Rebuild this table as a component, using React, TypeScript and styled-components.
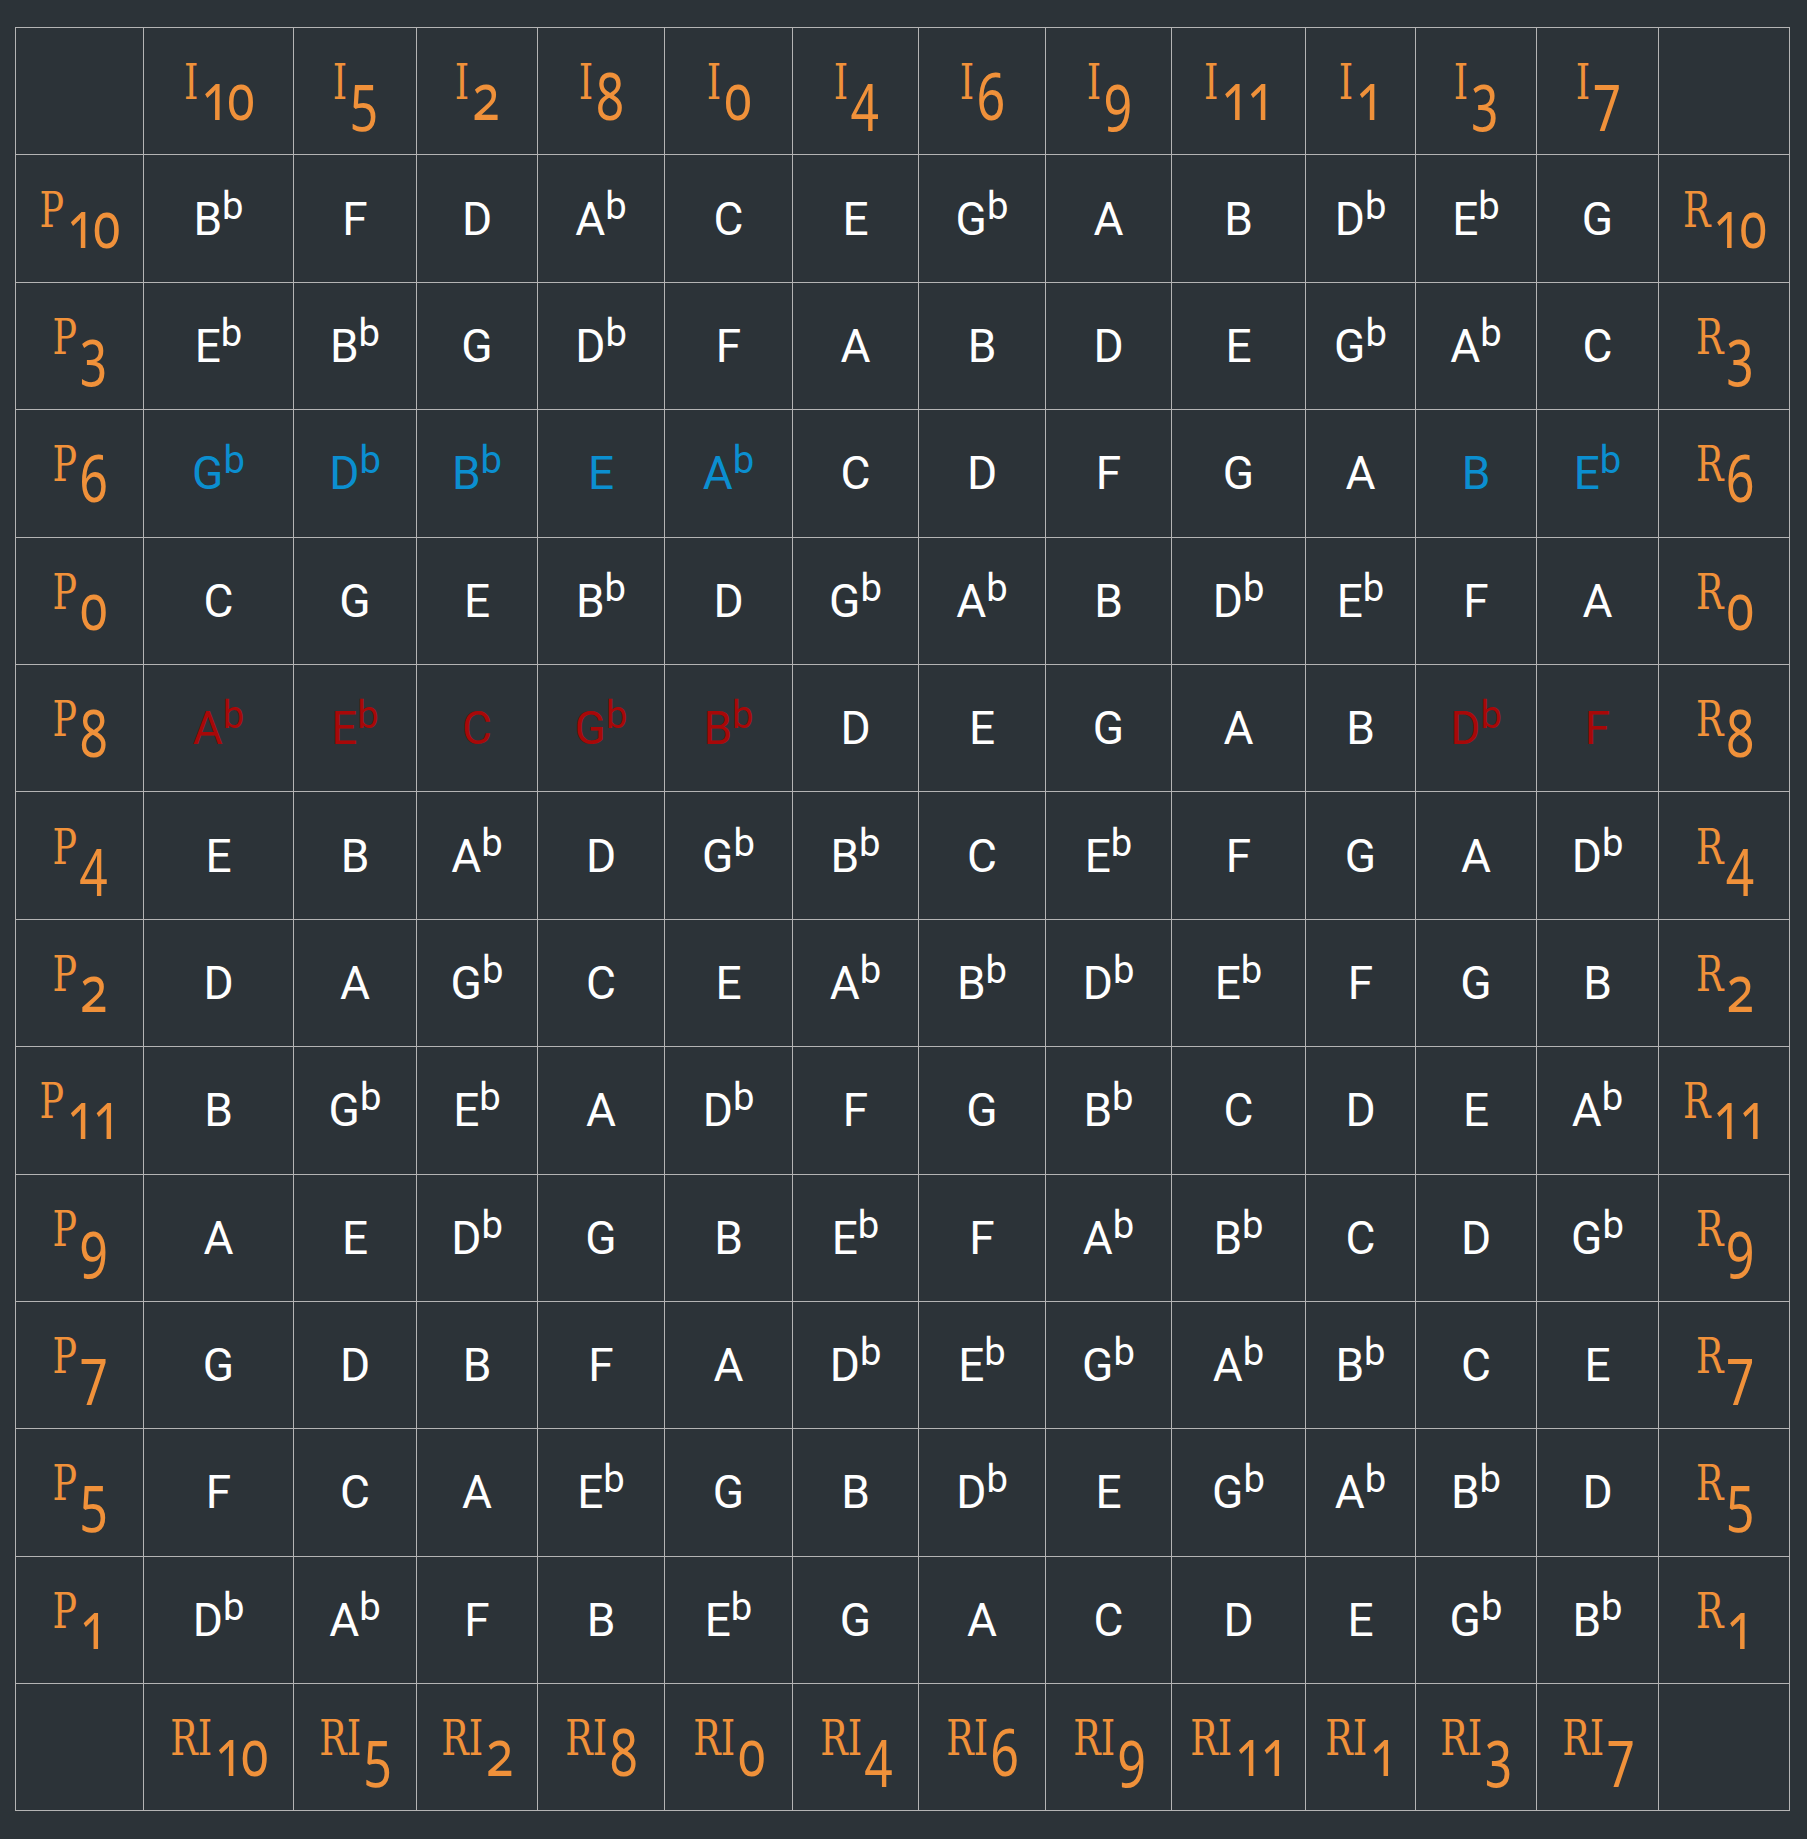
import React from 'react'
import styled, { createGlobalStyle } from 'styled-components'

const GlobalStyle = createGlobalStyle`
  html, body {
    margin: 0;
    padding: 0;
    background: #2c3338;
  }
`

const NAMES = ['C', 'Db', 'D', 'Eb', 'E', 'F', 'Gb', 'G', 'Ab', 'A', 'Bb', 'B']
const COLS = [10, 5, 2, 8, 0, 4, 6, 9, 11, 1, 3, 7]
const ROWS = [10, 3, 6, 0, 8, 4, 2, 11, 9, 7, 5, 1]
const WIDTHS = [128, 150, 123, 121, 127, 128, 126, 127, 126, 134, 110, 121, 122, 131]
const MARKED = [0, 1, 2, 3, 4, 10, 11]
const TONES: Record<number, 'blue' | 'red'> = { 6: 'blue', 8: 'red' }

const Page = styled.div`
  padding: 27px 0 28px 15px;
`

const Matrix = styled.table`
  border-collapse: collapse;
  table-layout: fixed;
  width: 1774px;
  border: 1px solid #b4b4b4;
`

const Row = styled.tr`
  height: 127.4px;
`

const Cell = styled.td<{ $tone?: 'blue' | 'red' }>`
  border: 1px solid #b4b4b4;
  padding: 0;
  text-align: center;
  vertical-align: middle;
  font-family: Roboto, 'Noto Sans', sans-serif;
  font-size: 46px;
  color: ${p => (p.$tone === 'blue' ? '#0b8fd0' : p.$tone === 'red' ? '#a80808' : '#ffffff')};

  sup {
    font-size: 0.83em;
    line-height: 0;
  }
`

// serif letter + old-style index, squeezed to the narrow face of the original
const Label = styled.span`
  display: inline-block;
  color: #f0913a;
  font-family: 'DejaVu Serif', 'Liberation Serif', serif;
  font-size: 48px;
  line-height: 0;
  vertical-align: 8px;
  white-space: nowrap;
  transform: scaleX(0.76);
  transform-origin: center;
`

const Index = styled.span`
  font-family: 'Noto Sans', sans-serif;
  font-variant-numeric: oldstyle-nums;
  font-size: 66px;
  letter-spacing: -2px;
  vertical-align: -21px;
  line-height: 0;
  margin-left: 4px;
`

const Note = ({ pc }: { pc: number }) => {
  const name = NAMES[pc]
  return (
    <>
      {name[0]}
      {name.length > 1 && <sup>b</sup>}
    </>
  )
}

const Tag = ({ prefix, n }: { prefix: string; n: number }) => (
  <Label>
    {prefix}
    <Index>{n}</Index>
  </Label>
)

const App = () => (
  <Page>
    <GlobalStyle />
    <Matrix>
      <colgroup>
        {WIDTHS.map((w, i) => (
          <col key={i} style={{ width: w }} />
        ))}
      </colgroup>
      <tbody>
        <Row>
          <Cell />
          {COLS.map(c => (
            <Cell key={c}>
              <Tag prefix="I" n={c} />
            </Cell>
          ))}
          <Cell />
        </Row>
        {ROWS.map(r => (
          <Row key={r}>
            <Cell>
              <Tag prefix="P" n={r} />
            </Cell>
            {COLS.map((c, j) => (
              <Cell key={c} $tone={MARKED.includes(j) ? TONES[r] : undefined}>
                <Note pc={(c + r - 10 + 24) % 12} />
              </Cell>
            ))}
            <Cell>
              <Tag prefix="R" n={r} />
            </Cell>
          </Row>
        ))}
        <Row>
          <Cell />
          {COLS.map(c => (
            <Cell key={c}>
              <Tag prefix="RI" n={c} />
            </Cell>
          ))}
          <Cell />
        </Row>
      </tbody>
    </Matrix>
  </Page>
)

export default App
